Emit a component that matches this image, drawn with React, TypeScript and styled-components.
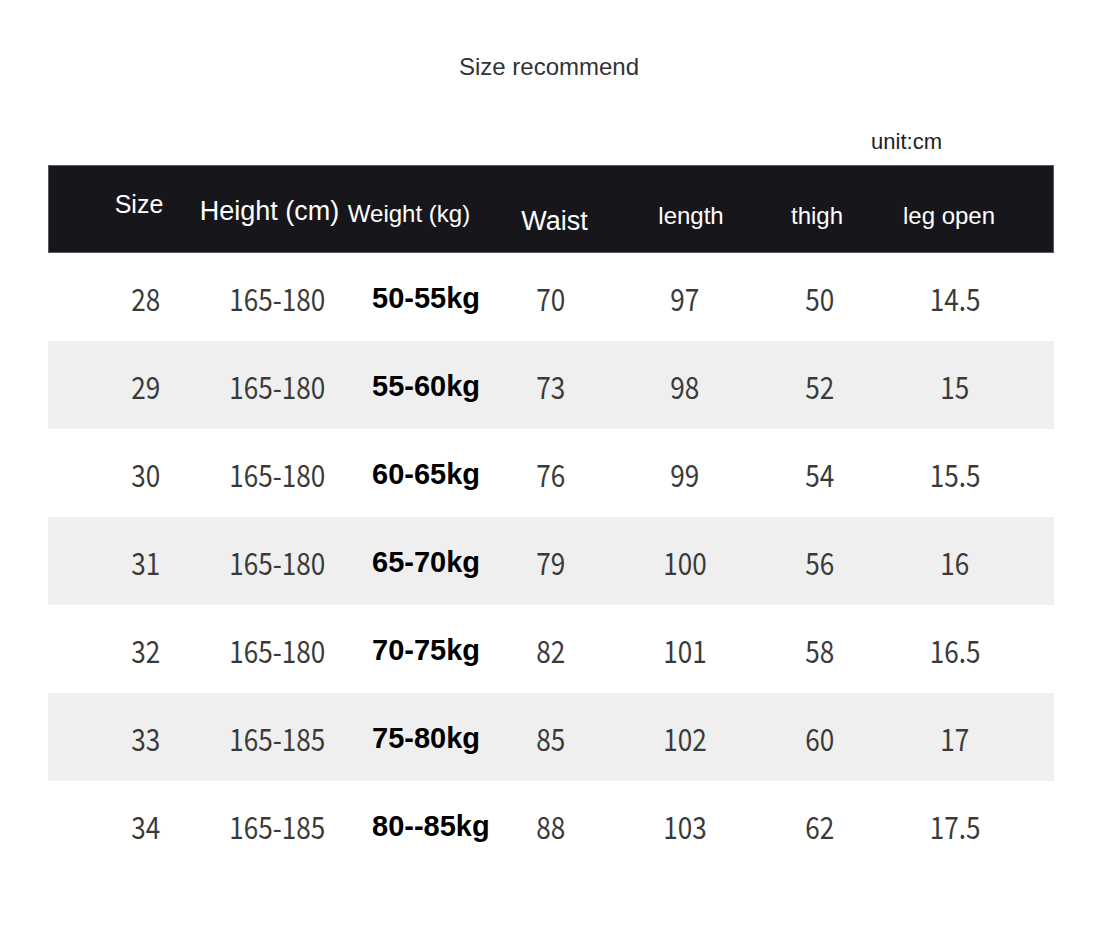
import React from "react";
import styled, { createGlobalStyle } from "styled-components";

const GlobalStyle = createGlobalStyle`
  html, body {
    margin: 0;
    padding: 0;
    background: #ffffff;
  }
  body {
    font-family: "Liberation Sans", Arial, sans-serif;
  }
`;

const Page = styled.div`
  width: 1100px;
  height: 937px;
  background: #ffffff;
  padding-top: 55px;
  box-sizing: border-box;
  display: flex;
  flex-direction: column;
`;

const Title = styled.div`
  font-family: "Liberation Sans", Arial, sans-serif;
  font-size: 24px;
  line-height: 1;
  color: #333333;
  text-align: center;
  width: 1098px;
`;

const UnitRow = styled.div`
  display: flex;
  justify-content: flex-end;
  padding-right: 158px;
  margin-top: 52px;
`;

const Unit = styled.span`
  font-family: "Liberation Sans", Arial, sans-serif;
  font-size: 22px;
  line-height: 1;
  color: #222222;
`;

const Table = styled.div`
  margin: 12px 0 0 48px;
  width: 1006px;
  display: flex;
  flex-direction: column;
`;

const HeaderBar = styled.div`
  height: 88px;
  background: #17171b;
  box-shadow: inset 0 0 0 1px #5a5a5e;
  display: grid;
  grid-template-columns: 140px 121px 158px 133px 140px 112px 152px;
  padding-left: 21px;
  box-sizing: border-box;
  align-items: start;
`;

const HeadCell = styled.div<{ $top: number; $size: number }>`
  display: flex;
  justify-content: center;
  padding-top: ${(p) => p.$top}px;
  font-family: "Liberation Sans", Arial, sans-serif;
  font-size: ${(p) => p.$size}px;
  line-height: 1;
  color: #ffffff;
  white-space: nowrap;
`;

const Row = styled.div<{ $shaded: boolean }>`
  height: 88px;
  background: ${(p) => (p.$shaded ? "#efefef" : "#ffffff")};
  display: grid;
  grid-template-columns: 130px 132px 166px 84px 184px 86px 184px;
  padding-left: 33px;
  box-sizing: border-box;
  align-items: center;
`;

const Cell = styled.div`
  display: flex;
  justify-content: center;
  align-items: center;
  padding-top: 2px;
`;

const Num = styled.span`
  display: inline-block;
  font-family: "Noto Sans CJK SC", "Noto Sans", sans-serif;
  font-weight: 400;
  font-size: 30px;
  line-height: 1;
  color: #3a3a3a;
  white-space: nowrap;
  transform: scaleX(0.87);
`;

const WeightCell = styled.div`
  display: flex;
  justify-content: flex-start;
  align-items: center;
  padding-left: 29px;
  font-family: "Liberation Sans", Arial, sans-serif;
  font-weight: 700;
  font-size: 29px;
  line-height: 1;
  color: #000000;
  white-space: nowrap;
  padding-top: 2px;
`;

const headers: { label: string; top: number; size: number }[] = [
  { label: "Size", top: 27, size: 25 },
  { label: "Height (cm)", top: 33, size: 27 },
  { label: "Weight (kg)", top: 37, size: 24 },
  { label: "Waist", top: 43, size: 27 },
  { label: "length", top: 39, size: 24 },
  { label: "thigh", top: 39, size: 24 },
  { label: "leg open", top: 39, size: 24 },
];

const rows: string[][] = [
  ["28", "165-180", "50-55kg", "70", "97", "50", "14.5"],
  ["29", "165-180", "55-60kg", "73", "98", "52", "15"],
  ["30", "165-180", "60-65kg", "76", "99", "54", "15.5"],
  ["31", "165-180", "65-70kg", "79", "100", "56", "16"],
  ["32", "165-180", "70-75kg", "82", "101", "58", "16.5"],
  ["33", "165-185", "75-80kg", "85", "102", "60", "17"],
  ["34", "165-185", "80--85kg", "88", "103", "62", "17.5"],
];

export default function App() {
  return (
    <>
      <GlobalStyle />
      <Page>
        <Title>Size recommend</Title>
        <UnitRow>
          <Unit>unit:cm</Unit>
        </UnitRow>
        <Table>
          <HeaderBar>
            {headers.map((h) => (
              <HeadCell key={h.label} $top={h.top} $size={h.size}>
                {h.label}
              </HeadCell>
            ))}
          </HeaderBar>
          {rows.map((r, i) => (
            <Row key={r[0]} $shaded={i % 2 === 1}>
              {r.map((v, j) =>
                j === 2 ? (
                  <WeightCell key={j}>{v}</WeightCell>
                ) : (
                  <Cell key={j}>
                    <Num>{v}</Num>
                  </Cell>
                )
              )}
            </Row>
          ))}
        </Table>
      </Page>
    </>
  );
}
